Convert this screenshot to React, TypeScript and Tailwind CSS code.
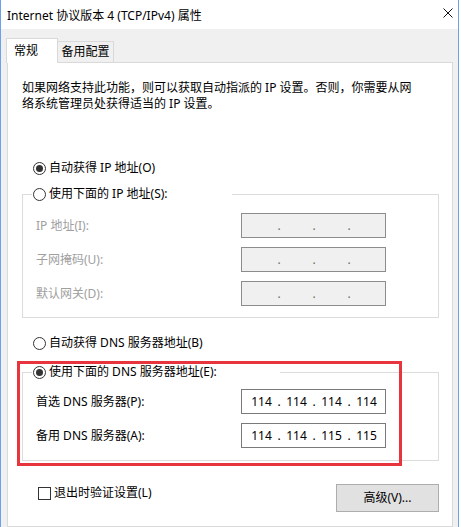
import { Fragment } from "react";

const font = "font-['Noto_Sans','Noto_Sans_CJK_SC',sans-serif]";

function Radio({ checked, label }: { checked?: boolean; label: string }) {
  return (
    <div className="flex items-center gap-[3px] h-[16px]">
      <span className="w-[13px] h-[13px] shrink-0 rounded-full border border-[#333333] bg-white flex items-center justify-center">
        {checked && <span className="w-[7px] h-[7px] rounded-full bg-[#333333]" />}
      </span>
      <span>{label}</span>
    </div>
  );
}

function IpField({ octets, disabled }: { octets?: string[]; disabled?: boolean }) {
  const parts = octets ?? ["", "", "", ""];
  return (
    <div
      className={
        disabled
          ? "w-[145px] h-[25px] border border-[#8c8c8c] bg-[#f0f0f0] text-[#6d6d6d] flex items-center pl-[4px]"
          : "w-[145px] h-[25px] border border-[#7a7a7a] bg-white text-black flex items-center pl-[4px]"
      }
    >
      {parts.map((p, i) => (
        <Fragment key={i}>
          {i > 0 && <span className="w-[4px] shrink-0 text-center">.</span>}
          <span className="w-[31px] shrink-0 text-center">{p}</span>
        </Fragment>
      ))}
    </div>
  );
}

function AddrRow({ label, octets, disabled }: { label: string; octets?: string[]; disabled?: boolean }) {
  return (
    <div className="flex items-center">
      <span className={disabled ? "w-[205px] text-[#a0a0a0]" : "w-[205px]"}>{label}</span>
      <IpField octets={octets} disabled={disabled} />
    </div>
  );
}

export default function App() {
  return (
    <div className={`w-[461px] h-[527px] bg-white overflow-hidden text-[12px] leading-[16px] text-black ${font}`}>
      <div className="w-[459px] h-full border-x border-[#6aa2e8] flex flex-col">
        {/* title bar */}
        <div className="h-[29px] bg-white flex justify-between pl-[6px] pr-[5px]">
          <span className="pt-[8px]">Internet 协议版本 4 (TCP/IPv4) 属性</span>
          <svg width="10" height="10" viewBox="0 0 10 10" className="mt-[8px]">
            <path d="M0.5 0.5 L9.5 9.5 M9.5 0.5 L0.5 9.5" stroke="#111" strokeWidth="1" fill="none" />
          </svg>
        </div>

        <div className="flex-1 bg-[#f0f0f0] pl-[6px] pr-[5px] pt-[9px] flex flex-col">
          {/* tabs */}
          <div className="flex items-end h-[24px]">
            <div className="relative z-10 -ml-px -mb-px h-[25px] w-[52px] bg-white border-x border-t border-[#d9d9d9] pl-[7px] pt-[4px]">
              常规
            </div>
            <div className="-ml-px h-[21px] w-[57px] bg-[#f0f0f0] border-x border-t border-[#d9d9d9] text-center pt-[2px]">
              备用配置
            </div>
          </div>

          {/* tab page */}
          <div className="relative flex-1 bg-white border border-[#d9d9d9] pl-[14px] pr-[13px] pt-[17px]">
            <p>
              如果网络支持此功能，则可以获取自动指派的 IP 设置。否则，你需要从网
              <br />
              络系统管理员处获得适当的 IP 设置。
            </p>

            <div className="mt-[48px] ml-[11px]">
              <Radio checked label="自动获得 IP 地址(O)" />
            </div>

            <fieldset className="mt-[10px] border border-[#dcdcdc]">
              <legend className="ml-[9px] w-[200px] px-px">
                <Radio label="使用下面的 IP 地址(S):" />
              </legend>
              <div className="pl-[13px] pt-[11px] pb-[11px] flex flex-col gap-[9px]">
                <AddrRow label="IP 地址(I):" disabled />
                <AddrRow label="子网掩码(U):" disabled />
                <AddrRow label="默认网关(D):" disabled />
              </div>
            </fieldset>

            <div className="mt-[17px] ml-[11px]">
              <Radio label="自动获得 DNS 服务器地址(B)" />
            </div>

            <fieldset className="mt-[13px] border border-[#dcdcdc]">
              <legend className="ml-[9px] w-[248px] px-px">
                <Radio checked label="使用下面的 DNS 服务器地址(E):" />
              </legend>
              <div className="pl-[13px] pt-[9px] pb-[12px] flex flex-col gap-[9px]">
                <AddrRow label="首选 DNS 服务器(P):" octets={["114", "114", "114", "114"]} />
                <AddrRow label="备用 DNS 服务器(A):" octets={["114", "114", "115", "115"]} />
              </div>
            </fieldset>

            <div className="mt-[23px] flex justify-between items-start">
              <div className="ml-[16px] mt-[1px] flex items-center gap-[3px] h-[16px]">
                <span className="w-[13px] h-[13px] border border-[#333333] bg-white" />
                <span>退出时验证设置(L)</span>
              </div>
              <button className="w-[103px] h-[28px] bg-[#e1e1e1] border border-[#adadad] text-center">
                高级(V)...
              </button>
            </div>

            {/* red highlight around the DNS group */}
            <div className="absolute left-[9px] top-[298px] w-[385px] h-[105px] border-[3px] border-[#e8343c]" />
          </div>
        </div>
      </div>
    </div>
  );
}
